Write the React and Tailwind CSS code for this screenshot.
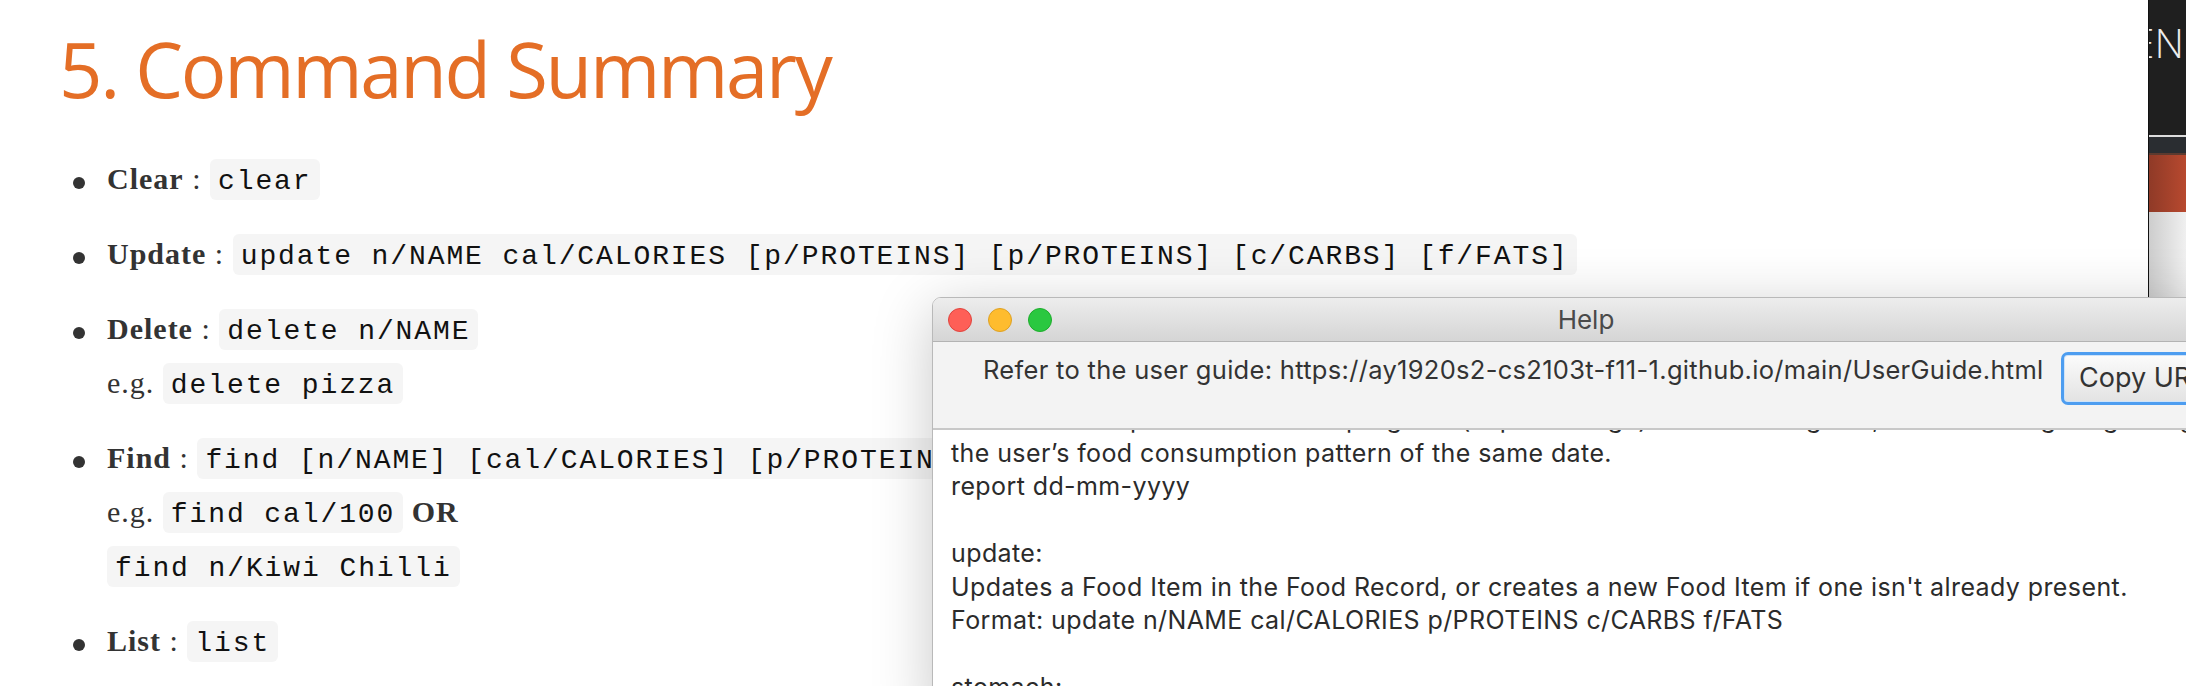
import React from 'react';

const serif = "font-['Liberation_Serif','Times_New_Roman',serif]";
const mono = "font-['Liberation_Mono','Courier_New',monospace]";
const sans = "font-['Inter','Noto_Sans',sans-serif]";

const Code = ({ children }) => (
    <code className={`${mono} rounded-[6px] bg-[#f5f5f5] px-[8px] pt-[7px] pb-[3px] text-[28px] leading-none tracking-[1.9px] text-[#111]`}>
        {children}
    </code>
);

const Item = ({ children }) => (
    <li className="flex">
        <div className="h-[54px] w-[34px] shrink-0 pt-[25px]">
            <div className="h-[12px] w-[12px] rounded-full bg-[#333]"></div>
        </div>
        <div className="flex flex-col">{children}</div>
    </li>
);

const Line = ({ children }) => <div className="whitespace-nowrap leading-[54px]">{children}</div>;

const Light = ({ fill, edge }) => (
    <span className={`h-[24px] w-[24px] rounded-full border ${fill} ${edge}`}></span>
);

const helpLines = [
    'Generates a report of the user’s progress (in percentage) towards the goals, and a message regarding',
    'the user’s food consumption pattern of the same date.',
    'report dd-mm-yyyy',
    '',
    'update:',
    "Updates a Food Item in the Food Record, or creates a new Food Item if one isn't already present.",
    'Format: update n/NAME cal/CALORIES p/PROTEINS c/CARBS f/FATS',
    '',
    'stomach:',
];

const HelpWindow = () => (
    <div className="absolute left-[932px] top-[297px] flex h-[420px] w-[1308px] flex-col overflow-hidden rounded-t-[9px] border border-[#b9b9b9] bg-white shadow-[0_12px_60px_rgba(0,0,0,0.22)]">
        {/* title bar */}
        <div className="grid h-[44px] shrink-0 grid-cols-[1fr_auto_1fr] items-center border-b border-[#b3b3b3] bg-gradient-to-b from-[#ededed] to-[#d5d5d5]">
            <div className="flex items-center gap-[16px] pl-[15px]">
                <Light fill="bg-[#fe5f57]" edge="border-[#e0443e]" />
                <Light fill="bg-[#febc2e]" edge="border-[#dea123]" />
                <Light fill="bg-[#2ac840]" edge="border-[#1dad2b]" />
            </div>
            <span className={`${sans} text-[26px] text-[#4a4a4a]`}>Help</span>
            <div></div>
        </div>

        {/* link row */}
        <div className="flex h-[88px] shrink-0 items-start border-b-2 border-[#c8c8c8] bg-[#f3f3f3] pl-[50px] pt-[10px]">
            <span className={`${sans} mt-[3px] w-[1078px] shrink-0 whitespace-nowrap text-[25.5px] leading-[29px] tracking-[0.3px] text-[#333]`}>
                Refer to the user guide: https://ay1920s2-cs2103t-f11-1.github.io/main/UserGuide.html
            </span>
            <button className={`${sans} flex h-[53px] w-[200px] shrink-0 items-center rounded-[7px] border-[3px] border-[#4d9df0] bg-gradient-to-b from-[#fbfbfb] to-[#e3e3e3] pl-[15px] text-[27px] text-[#333] shadow-[inset_0_0_0_1px_#cfe3f8]`}>
                Copy URL
            </button>
        </div>

        {/* text area */}
        <div className="flex-1 overflow-hidden bg-white pl-[18px]">
            <div className={`${sans} -mt-[27px] text-[25px] leading-[33.5px] tracking-[0.4px] text-[#2b2b2b]`}>
                {helpLines.map((t, i) => (
                    <div key={i} className="h-[33.5px] whitespace-nowrap">{t}</div>
                ))}
            </div>
        </div>
    </div>
);

export default function App() {
    return (
        <div className="relative flex h-[686px] w-[2186px] overflow-hidden bg-white">
            <main className="w-[2148px] shrink-0 bg-white pt-[31px]">
                <h1 className="pl-[59px] font-['Open_Sans',sans-serif] text-[76px] font-normal leading-none tracking-[-2.3px] text-[#e46e26]">
                    5. Command Summary
                </h1>

                <ul className={`${serif} mt-[45px] flex flex-col gap-[21px] pl-[73px] text-[30px] tracking-[1px] text-[#333]`}>
                    <Item>
                        <Line><b>Clear</b> : <Code>clear</Code></Line>
                    </Item>
                    <Item>
                        <Line><b>Update</b> : <Code>update n/NAME cal/CALORIES [p/PROTEINS] [p/PROTEINS] [c/CARBS] [f/FATS]</Code></Line>
                    </Item>
                    <Item>
                        <Line><b>Delete</b> : <Code>delete n/NAME</Code></Line>
                        <Line>e.g. <Code>delete pizza</Code></Line>
                    </Item>
                    <Item>
                        <Line><b>Find</b> : <Code>find [n/NAME] [cal/CALORIES] [p/PROTEINS] [c/CARBS] [f/FATS]</Code></Line>
                        <Line>e.g. <Code>find cal/100</Code> <b>OR</b></Line>
                        <Line><Code>find n/Kiwi Chilli</Code></Line>
                    </Item>
                    <Item>
                        <Line><b>List</b> : <Code>list</Code></Line>
                    </Item>
                </ul>
            </main>

            {/* window behind, at the right edge */}
            <aside className="flex w-[38px] shrink-0 flex-col overflow-hidden border-l border-[#111]">
                <div className="flex h-[135px] justify-end bg-[#1f1f1f] pr-[2px] pt-[22px]">
                    <span className="whitespace-nowrap font-['Open_Sans',sans-serif] text-[41px] font-light leading-none text-[#ececec]">EN</span>
                </div>
                <div className="h-[2px] bg-[#dcdcdc]"></div>
                <div className="h-[16px] bg-[#2a2d31]"></div>
                <div className="h-[2px] bg-[#5c3a2f]"></div>
                <div className="h-[57px] bg-gradient-to-r from-[#8f3a27] to-[#b8492f]"></div>
                <div className="flex-1 bg-gradient-to-r from-[#cdcdcd] to-[#f0f0f0]"></div>
            </aside>

            <HelpWindow />
        </div>
    );
}
